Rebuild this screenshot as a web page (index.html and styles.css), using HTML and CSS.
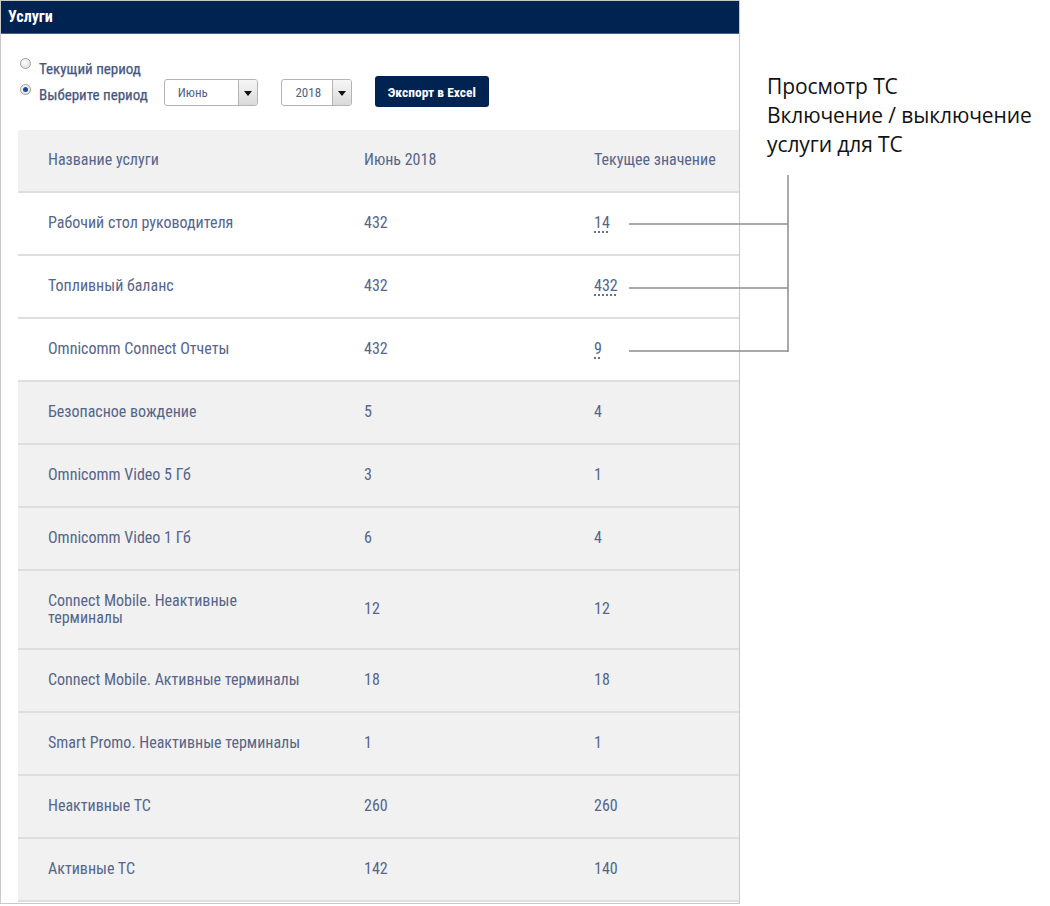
FILE: index.html
```html
<!DOCTYPE html>
<html lang="ru">
<head>
<meta charset="utf-8">
<title>Услуги</title>
<link rel="stylesheet" href="styles.css">
</head>
<body>
<div class="page">
  <section class="panel">
    <header class="panel-head">Услуги</header>
    <div class="controls">
      <div class="radios">
        <label class="radio"><span class="dot"></span>Текущий период</label>
        <label class="radio"><span class="dot checked"></span>Выберите период</label>
      </div>
      <div class="select sel-month"><span class="val">Июнь</span><span class="arrow"></span></div>
      <div class="select sel-year"><span class="val">2018</span><span class="arrow"></span></div>
      <button class="btn">Экспорт в Excel</button>
    </div>
    <div class="table-wrap">
      <table class="grid">
        <thead>
          <tr><th class="c1">Название услуги</th><th class="c2">Июнь 2018</th><th class="c3">Текущее значение</th></tr>
        </thead>
        <tbody>
          <tr class="w"><td>Рабочий стол руководителя</td><td>432</td><td><a class="lnk">14</a></td></tr>
          <tr class="w"><td>Топливный баланс</td><td>432</td><td><a class="lnk">432</a></td></tr>
          <tr class="w"><td>Omnicomm Connect Отчеты</td><td>432</td><td><a class="lnk">9</a></td></tr>
          <tr><td>Безопасное вождение</td><td>5</td><td>4</td></tr>
          <tr><td>Omnicomm Video 5 Гб</td><td>3</td><td>1</td></tr>
          <tr><td>Omnicomm Video 1 Гб</td><td>6</td><td>4</td></tr>
          <tr><td>Connect Mobile. Неактивные терминалы</td><td>12</td><td>12</td></tr>
          <tr><td>Connect Mobile. Активные терминалы</td><td>18</td><td>18</td></tr>
          <tr><td>Smart Promo. Неактивные терминалы</td><td>1</td><td>1</td></tr>
          <tr><td>Неактивные ТС</td><td>260</td><td>260</td></tr>
          <tr><td>Активные ТС</td><td>142</td><td>140</td></tr>
        </tbody>
      </table>
    </div>
  </section>
  <aside class="note">
    <p>Просмотр ТС</p>
    <p>Включение / выключение</p>
    <p>услуги для ТС</p>
  </aside>
  <svg class="connectors" width="1050" height="906" viewBox="0 0 1050 906">
    <g stroke="#8c8c8c" stroke-width="1.5" fill="none">
      <line x1="788" y1="175" x2="788" y2="352"/>
      <line x1="629" y1="224" x2="788" y2="224"/>
      <line x1="629" y1="288" x2="788" y2="288"/>
      <line x1="629" y1="351" x2="788" y2="351"/>
    </g>
  </svg>
</div>
</body>
</html>
```
FILE: styles.css
```css
* { box-sizing: border-box; }
html, body { margin: 0; padding: 0; background: #fff; }
body { font-family: "Roboto Condensed", Roboto, "Liberation Sans", sans-serif; }

.page {
  position: relative;
  display: flex;
  align-items: flex-start;
  width: 1050px;
  height: 906px;
}

.panel {
  width: 740px;
  height: 904px;
  border: 1px solid #c9c9c9;
  overflow: hidden;
  flex: none;
}

.panel-head {
  height: 33px;
  background: #002352;
  border-bottom: 1px solid #4a5f80;
  color: #fff;
  font-weight: 700;
  font-size: 16px;
  line-height: 32px;
  padding-left: 7px;
}

.controls {
  display: flex;
  align-items: flex-end;
  padding: 22px 0 0 19px;
  height: 74px;
}

.radios { display: flex; flex-direction: column; }

.radio {
  display: flex;
  align-items: center;
  height: 26px;
  font-size: 15px;
  font-weight: 400;
  color: #46567f;
  -webkit-text-stroke: 0.25px #46567f;
}

.dot {
  width: 11px;
  height: 11px;
  border-radius: 50%;
  border: 1px solid #a0a0a0;
  background: radial-gradient(circle at 40% 35%, #fff 0, #e3e3e3 75%);
  margin-right: 8px;
  margin-top: -11px;
  position: relative;
  flex: none;
}
.dot.checked::after {
  content: "";
  position: absolute;
  left: 2px; top: 2px;
  width: 5px; height: 5px;
  border-radius: 50%;
  background: #1b4c8f;
}

.select {
  display: flex;
  height: 27px;
  border: 1px solid #b4b4b4;
  border-radius: 3px;
  margin-bottom: 2px;
  background: #fff;
  overflow: hidden;
}
.sel-month { width: 94px; margin-left: 16px; }
.sel-year { width: 71px; margin-left: 23px; }
.select .val {
  flex: 1;
  font-size: 13px;
  line-height: 25px;
  color: #4f5f86;
}
.sel-month .val { padding-left: 13px; }
.sel-year .val { text-align: center; padding-left: 3px; }
.select .arrow {
  width: 19px;
  border-left: 1px solid #b4b4b4;
  background: linear-gradient(#f7f7f7, #d9d9d9);
  position: relative;
}
.select .arrow::after {
  content: "";
  position: absolute;
  left: 5px; top: 11px;
  border-left: 4px solid transparent;
  border-right: 4px solid transparent;
  border-top: 5px solid #111;
}

.btn {
  margin-left: 23px;
  margin-bottom: 1px;
  width: 114px;
  height: 31px;
  background: #002352;
  color: #fff;
  border: 0;
  border-radius: 3px;
  font-family: inherit;
  font-weight: 700;
  font-size: 13.5px;
  padding: 0;
}

.table-wrap {
  margin: 22px 0 0 17px;
}

.grid {
  width: 722px;
  border-collapse: collapse;
  table-layout: fixed;
  font-size: 16px;
  font-weight: 400;
  color: #56658a;
}
.grid th, .grid td {
  text-align: left;
  vertical-align: middle;
  padding: 22px 30px;
  line-height: 16.5px;
  font-weight: 400;
  border-bottom: 2px solid #dedede;
}
.grid td { height: 63px; }
.grid th { height: 62px; }
.grid thead tr { background: #f1f1f1; }
.grid tbody tr { background: #f1f1f1; }
.grid tbody tr.w { background: #fff; }
.grid .c1 { width: 346px; }
.grid .c2 { width: 230px; padding-left: 0; }
.grid .c3 { padding-left: 0; padding-right: 0; }
.grid td:nth-child(2), .grid td:nth-child(3) { padding-left: 0; padding-right: 0; }
.grid td:first-child { padding-right: 56px; }

.lnk {
  color: #56658a;
  text-decoration: underline dotted #3a4f7a;
  text-underline-offset: 3px;
}

.note {
  margin-left: 27px;
  padding-top: 72px;
  font-family: "Open Sans", "Liberation Sans", sans-serif;
  font-size: 21px;
  color: #111;
  letter-spacing: -0.1px;
}
.note p { margin: 0; line-height: 29px; }

.connectors {
  position: absolute;
  left: 0; top: 0;
  pointer-events: none;
}
```
